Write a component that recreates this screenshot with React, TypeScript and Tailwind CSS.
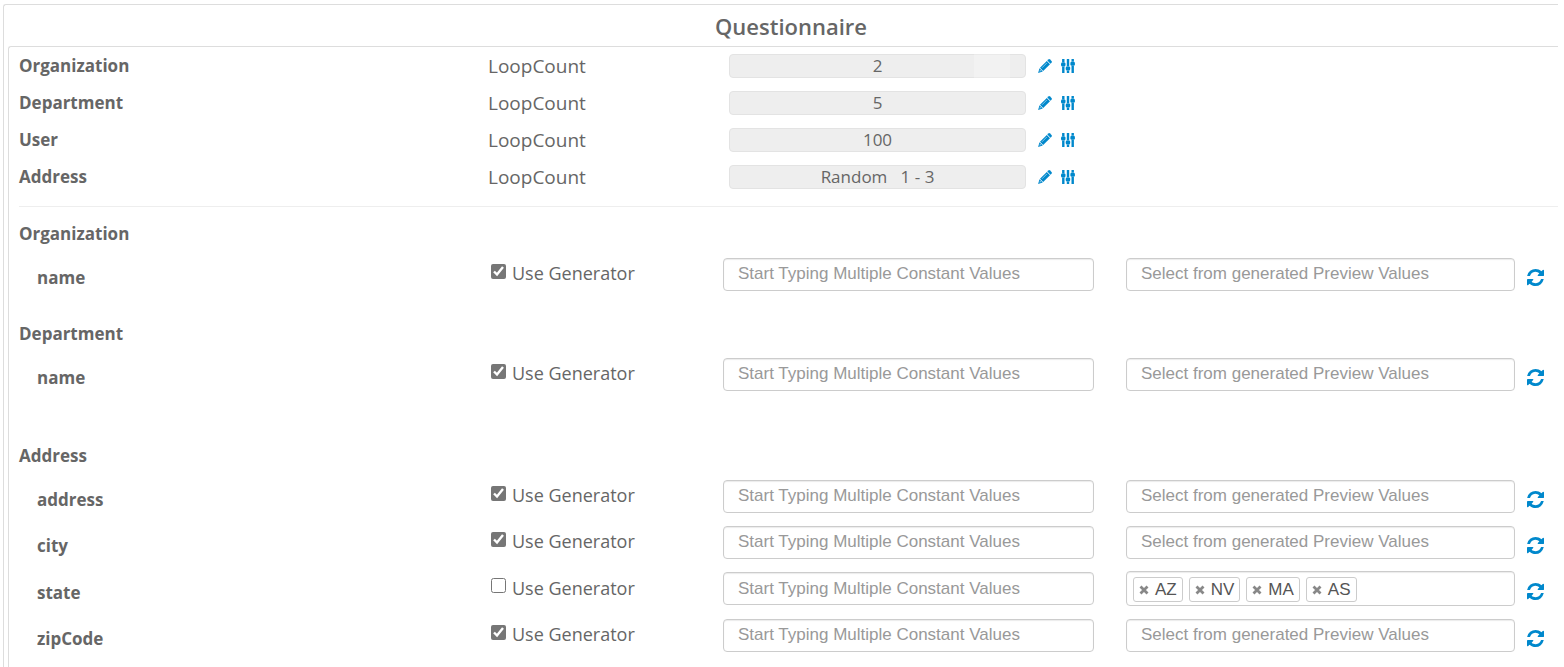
import { useState } from "react"

const loops = [
  { name: "Organization", value: "2", marked: true },
  { name: "Department", value: "5" },
  { name: "User", value: "100" },
  { name: "Address", value: "Random   1 - 3" },
]

interface Field {
  name: string
  generator: boolean
  values?: string[]
}

const COLS = "grid grid-cols-[minmax(0,469fr)_minmax(0,235fr)_minmax(0,403fr)_minmax(0,401fr)_minmax(0,31fr)]"
const BOX = "w-full rounded border border-[#ccc] bg-white shadow-[inset_0_1px_1px_rgba(0,0,0,0.08)]"
const TEXT_INPUT = "h-[33px] px-3.5 font-['Liberation_Sans',Arial,sans-serif] text-[17px] text-[#555] placeholder:text-[#999] outline-none"

function PencilIcon() {
  return (
    <svg viewBox="0 0 14 14" className="h-[14px] w-[14px]" fill="currentColor" aria-hidden="true">
      <path d="M9.3 1.5 10.3.5q.9-.8 1.8 0l1.4 1.4q.8.9 0 1.8l-1 1z" />
      <path d="M8.8 2 12 5.2 5.2 12 2 8.8z" />
      <path fillRule="evenodd" d="M1.5 9.2 4.8 12.5.1 13.9zM2 11.1 1.5 12.5 2.9 12z" />
      <path d="M4 8.8 8.9 3.9" stroke="#fff" strokeWidth=".5" />
    </svg>
  )
}

function SlidersIcon() {
  return (
    <svg viewBox="0 0 14 14" className="h-[14px] w-[14px]" fill="currentColor" aria-hidden="true">
      <path d="M1.1 0h2.4v3.2H1.1zM1.1 7.6h2.4V14H1.1zM5.8 0h2.4v7H5.8zM5.8 11.6h2.4V14H5.8zM10.5 0h2.4v2.4h-2.4zM10.5 6.8h2.4V14h-2.4z" />
      <rect x="0" y="3.2" width="4.5" height="4.4" rx="1.5" />
      <rect x="4.7" y="7.2" width="4.5" height="4.4" rx="1.5" />
      <rect x="9.4" y="2.4" width="4.5" height="4.4" rx="1.5" />
    </svg>
  )
}

function RefreshIcon() {
  return (
    <svg viewBox="0 0 1536 1536" className="h-[17px] w-[17px]" fill="currentColor" aria-hidden="true">
      <path d="M1511 928q0 5-1 7-64 268-268 434.5t-478 166.5q-146 0-282.5-55t-243.5-157l-129 129q-19 19-45 19t-45-19-19-45v-448q0-26 19-45t45-19h448q26 0 45 19t19 45-19 45l-137 137q71 66 161 102t187 36q134 0 250-65t186-179q11-17 53-117 8-23 30-23h192q13 0 22.5 9.5t9.5 22.5zm25-800v448q0 26-19 45t-45 19h-448q-26 0-45-19t-19-45 19-45l138-138q-148-137-349-137-134 0-250 65t-186 179q-11 17-53 117-8 23-30 23h-199q-13 0-22.5-9.5t-9.5-22.5v-7q65-268 270-434.5t480-166.5q146 0 284 55.5t245 156.5l130-129q19-19 45-19t45 19 19 45z" />
    </svg>
  )
}

function CloseIcon() {
  return (
    <svg viewBox="0 0 10 10" className="h-[10px] w-[10px]" aria-hidden="true">
      <path d="M1.5 1.5 8.5 8.5M8.5 1.5 1.5 8.5" stroke="currentColor" strokeWidth="2.8" />
    </svg>
  )
}

function FieldRow({ id, field }: { id: string; field: Field }) {
  const [checked, setChecked] = useState(field.generator)
  const [values, setValues] = useState(field.values || [])

  return (
    <div className={`${COLS} items-center ${values.length > 0 ? "min-h-[47px]" : "min-h-[46px]"}`}>
      <div className="pt-2 pl-[18px] text-[17px] leading-6 font-bold">{field.name}</div>
      <label className="flex items-center gap-1.5 pb-0.5 pl-[3px] text-[18px] leading-6">
        <input
          type="checkbox"
          checked={checked}
          onChange={(e) => setChecked(e.target.checked)}
          className="mb-1 size-[15px] accent-[#767676]"
        />
        Use Generator
      </label>
      <div className="pr-8">
        <input aria-label={`${id} constant values`} placeholder="Start Typing Multiple Constant Values" className={`${BOX} ${TEXT_INPUT}`} />
      </div>
      <div className="pr-3">
        {values.length > 0 ? (
          <div className={`${BOX} flex h-[35px] items-center gap-1.5 px-1.5 pt-0.5 font-['Liberation_Sans',Arial,sans-serif] text-[17px] text-[#555]`}>
            {values.map((value) => (
              <span key={value} className="flex h-[25px] shrink-0 items-center gap-1.5 rounded-[3px] border border-[#ccc] px-[5px]">
                <button
                  type="button"
                  aria-label={`Remove ${value}`}
                  onClick={() => setValues(values.filter((v) => v !== value))}
                  className="text-[#888]"
                >
                  <CloseIcon />
                </button>
                {value}
              </span>
            ))}
            <input aria-label={`${id} preview values`} className="min-w-0 flex-1 outline-none" />
          </div>
        ) : (
          <input aria-label={`${id} preview values`} placeholder="Select from generated Preview Values" className={`${BOX} ${TEXT_INPUT}`} />
        )}
      </div>
      <button type="button" aria-label={`Refresh ${id}`} className="mt-1.5 w-[17px] text-[#0088cc]">
        <RefreshIcon />
      </button>
    </div>
  )
}

function Section({ title, fields, className }: { title: string; fields: Field[]; className: string }) {
  return (
    <section className={className}>
      <h2 className="pb-[5px] text-[17px] leading-6 font-bold">{title}</h2>
      {fields.map((field) => (
        <FieldRow key={field.name} id={`${title} ${field.name}`} field={field} />
      ))}
    </section>
  )
}

export default function App() {
  return (
    <main className="bg-white pt-1 pr-1.5 pl-[3px] font-['Open_Sans',sans-serif] text-[#666]">
      <div className="rounded-tl-[3px] border-t border-l border-[#ddd] pl-1">
        <h1 className="pt-1.5 pb-[5px] pl-4 text-center text-[22px] leading-[30px] font-semibold">Questionnaire</h1>

        <div className="rounded-tl-[3px] border-t border-l border-[#ddd] pb-4 pl-2.5">
          {/* Loop counts */}
          {loops.map((loop) => (
            <div key={loop.name} className={`${COLS} h-[37px] items-center`}>
              <div className="text-[17px] leading-6 font-bold">{loop.name}</div>
              <label htmlFor={`loop-${loop.name}`} className="text-[19px] leading-6">LoopCount</label>
              <div className="flex items-center pr-[51px] pl-1.5">
                <div className="relative min-w-0 flex-1">
                  <input
                    id={`loop-${loop.name}`}
                    disabled
                    defaultValue={loop.value}
                    className="block h-6 w-full rounded border border-[#e3e3e3] bg-[#eee] text-center text-[17px] text-[#666]"
                  />
                  {loop.marked && <span className="absolute inset-y-0 right-4 w-9 bg-white/25" />}
                </div>
                <button type="button" aria-label={`Edit ${loop.name}`} className="ml-3 text-[#0088cc]"><PencilIcon /></button>
                <button type="button" aria-label={`Configure ${loop.name}`} className="ml-[9px] text-[#0088cc]"><SlidersIcon /></button>
              </div>
            </div>
          ))}

          <hr className="mt-[11px] border-[#eee]" />

          <Section className="pt-[15px]" title="Organization" fields={[{ name: "name", generator: true }]} />
          <Section className="pt-[25px]" title="Department" fields={[{ name: "name", generator: true }]} />
          <Section
            className="pt-[47px]"
            title="Address"
            fields={[
              { name: "address", generator: true },
              { name: "city", generator: true },
              { name: "state", generator: false, values: ["AZ", "NV", "MA", "AS"] },
              { name: "zipCode", generator: true },
            ]}
          />
        </div>
      </div>
    </main>
  )
}
